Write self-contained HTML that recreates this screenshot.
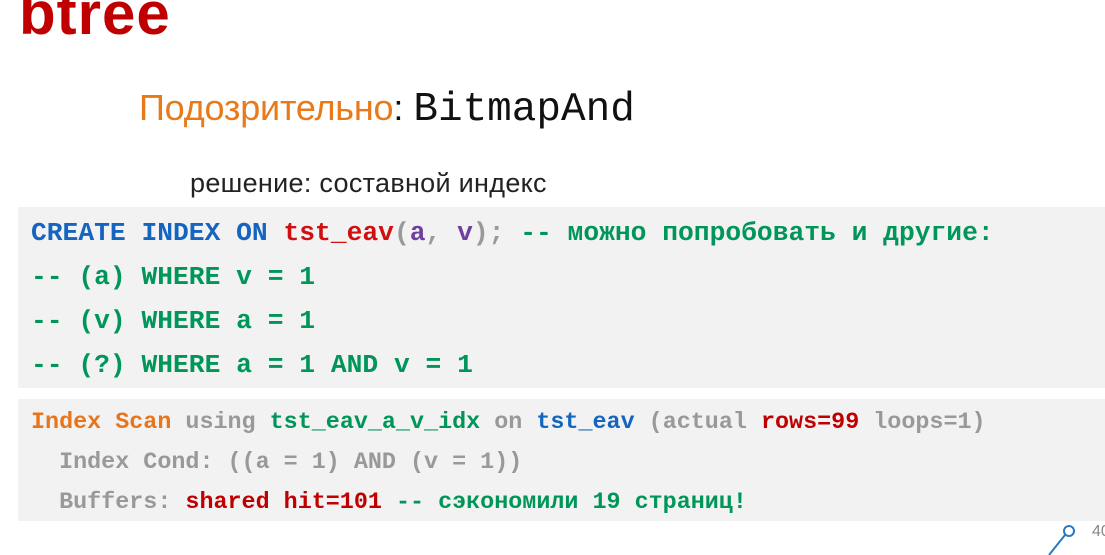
<!DOCTYPE html>
<html><head><meta charset="utf-8"><style>
html,body{margin:0;padding:0;width:1105px;height:555px;overflow:hidden;background:#fff;font-family:"Liberation Sans","DejaVu Sans",sans-serif;}
.a{position:absolute;white-space:pre;}
.m{font-family:"Liberation Mono","DejaVu Sans Mono",monospace;}
.box{position:absolute;left:18px;right:0;background:#f2f2f2;}
.b{color:#1565c0}.r{color:#d01010}.g{color:#00965a}.p{color:#7040a0}.gr{color:#999}.o{color:#e8741c}.dr{color:#c00000}
</style></head><body>
<div class="a" style="left:19px;top:-21px;font-size:60px;font-weight:bold;color:#c00000;letter-spacing:1px">btree</div>
<div class="a" style="left:139px;top:87px;font-size:36px;color:#e87a1a;letter-spacing:-0.2px">Подозрительно<span style="color:#111;letter-spacing:0">: </span><span class="m" style="color:#111;font-size:41px;letter-spacing:0">BitmapAnd</span></div>
<div class="a" style="left:190px;top:168px;font-size:27px;color:#222;letter-spacing:0.3px">решение: составной индекс</div>
<div class="box" style="top:207px;height:181px"></div>
<div class="a m" style="left:31px;top:211px;font-size:26.3px;font-weight:bold;line-height:44px"><span class="b">CREATE INDEX ON </span><span class="r">tst_eav</span><span class="gr">(</span><span class="p">a</span><span class="gr">, </span><span class="p">v</span><span class="gr">); </span><span class="g">-- можно попробовать и другие:</span>
<span class="g">-- (a) WHERE v = 1</span>
<span class="g">-- (v) WHERE a = 1</span>
<span class="g">-- (?) WHERE a = 1 AND v = 1</span></div>
<div class="box" style="top:399px;height:122px"></div>
<div class="a m" style="left:31px;top:403px;font-size:23.4px;line-height:40px;font-weight:bold"><span class="o">Index Scan</span><span class="gr"> using </span><span class="g">tst_eav_a_v_idx</span><span class="gr"> on </span><span class="b">tst_eav</span><span class="gr"> (actual </span><span class="dr">rows=99</span><span class="gr"> loops=1)</span>
<span class="gr">  Index Cond: ((a = 1) AND (v = 1))</span>
<span class="gr">  Buffers: </span><span class="dr">shared hit=101</span><span class="g"> -- сэкономили 19 страниц!</span></div>
<svg class="a" style="left:1045px;top:525px" width="40" height="30"><line x1="4" y1="30" x2="20" y2="10" stroke="#2a7ac0" stroke-width="2"/><circle cx="24" cy="6" r="5" fill="#fff" stroke="#2a7ac0" stroke-width="2"/></svg>
<div class="a" style="left:1092px;top:523px;font-size:16px;color:#888">40</div>
</body></html>
